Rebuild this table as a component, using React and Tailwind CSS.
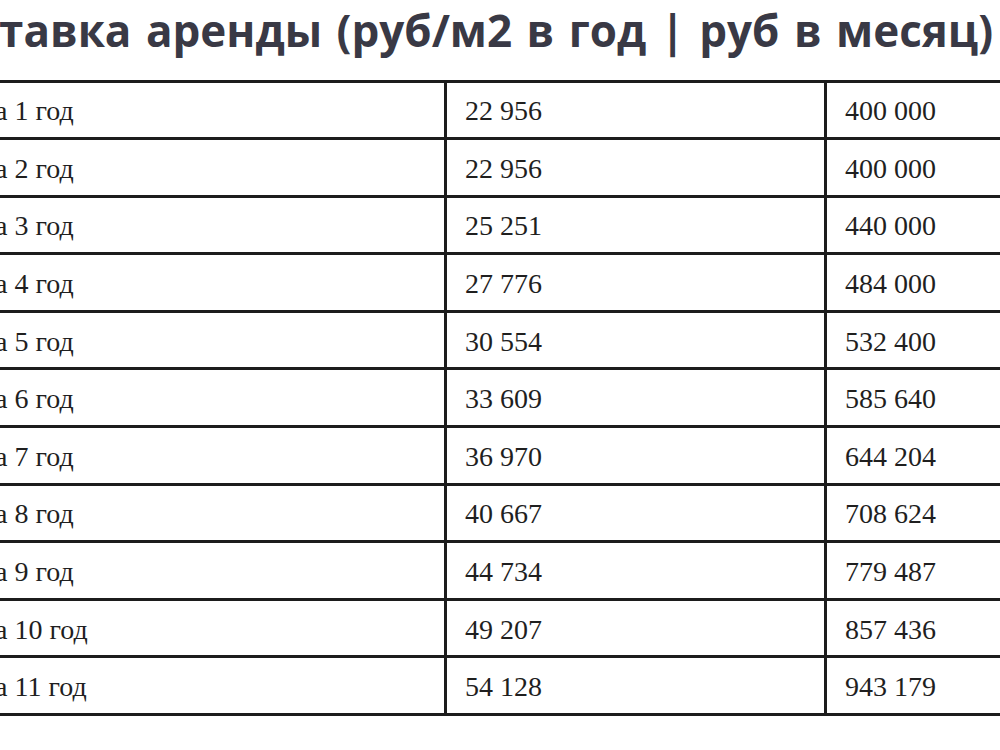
import React from 'react';

const rows = [
  ['За 1 год', '22 956', '400 000'],
  ['За 2 год', '22 956', '400 000'],
  ['За 3 год', '25 251', '440 000'],
  ['За 4 год', '27 776', '484 000'],
  ['За 5 год', '30 554', '532 400'],
  ['За 6 год', '33 609', '585 640'],
  ['За 7 год', '36 970', '644 204'],
  ['За 8 год', '40 667', '708 624'],
  ['За 9 год', '44 734', '779 487'],
  ['За 10 год', '49 207', '857 436'],
  ['За 11 год', '54 128', '943 179'],
];

export default function App() {
  return (
    <div className="w-[1000px] h-[750px] overflow-hidden bg-white">
      <div className="ml-[-37px] w-[1140px]">
        {/* Heading */}
        <h2 className="h-[79.5px] pt-[5px] ml-[8px] whitespace-nowrap font-['Open_Sans',sans-serif] font-bold text-[44px] leading-[50px] [word-spacing:3px] text-[#393945]">
          Ставка аренды (руб/м2 в год | руб в месяц)
        </h2>

        {/* Table */}
        <div className="border-t-[3px] border-[#1c1c1c] font-['Liberation_Serif',serif] text-[28px] text-[#1f1f1f]">
          {rows.map((row) => (
            <div key={row[0]} className="flex h-[57.6px] border-b-[3px] border-[#1c1c1c]">
              <div className="w-[484px] flex items-center pl-[18px] pt-[3px] border-r-[3px] border-[#1c1c1c]">
                {row[0]}
              </div>
              <div className="w-[380px] flex items-center pl-[18px] pt-[3px] border-r-[3px] border-[#1c1c1c]">
                {row[1]}
              </div>
              <div className="flex-1 flex items-center pl-[18px] pt-[3px]">
                {row[2]}
              </div>
            </div>
          ))}
        </div>
      </div>
    </div>
  );
}
